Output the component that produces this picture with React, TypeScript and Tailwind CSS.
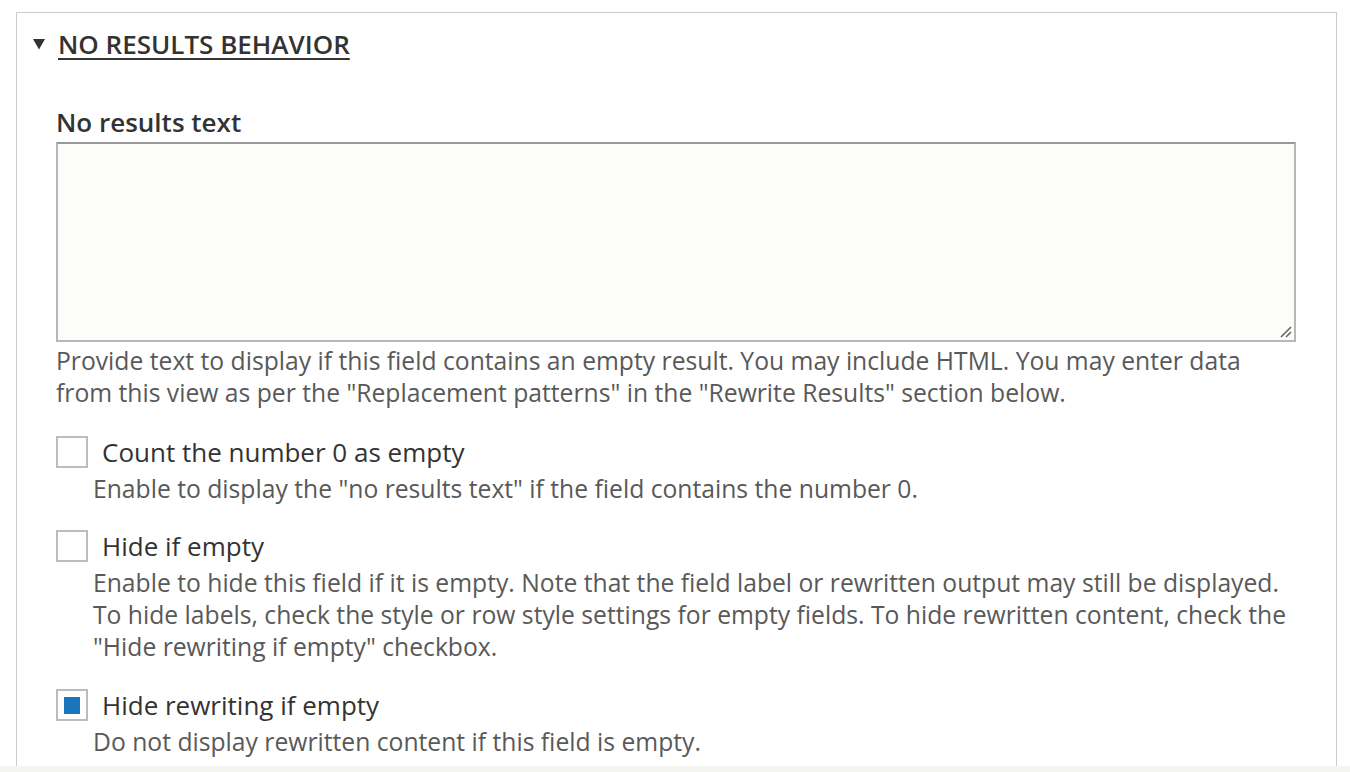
import React from 'react'

const font = { fontFamily: '"Open Sans", "Liberation Sans", sans-serif' }

type CheckProps = {
  label: string
  checked?: boolean
  lines: string[]
  className?: string
}

const CheckItem: React.FC<CheckProps> = ({ label, checked = false, lines, className = '' }) => (
  <div className={className}>
    <label className="flex items-center h-[32px]">
      <span className="w-[32px] h-[32px] border-2 border-[#bcbcbc] bg-white flex items-center justify-center shrink-0">
        {checked && <span className="w-[16px] h-[17px] bg-[#1b75bb]" />}
      </span>
      <span className="ml-[14px] text-[26px] leading-[32px] text-[#333]">{label}</span>
    </label>
    <div className="ml-[37px] mt-[5px] text-[24.7px] leading-[32px] text-[#595959]">
      {lines.map((l, i) => (
        <div key={i} className="whitespace-nowrap">{l}</div>
      ))}
    </div>
  </div>
)

const App: React.FC = () => {
  return (
    <div className="w-[1350px] h-[772px] bg-white flex flex-col overflow-hidden" style={font}>
      <div className="flex-1 pt-[12px] pl-[16px] pr-[13px] overflow-hidden">
        <div className="h-full border border-b-0 border-[#cccccc] pl-[15px] pt-[15px]">
          {/* Summary */}
          <div className="flex items-center h-[32px]">
            <svg className="ml-[1px] mr-[13px]" width="12" height="11" viewBox="0 0 12 11">
              <path d="M0 0 H12 L6 10.5 Z" fill="#333" />
            </svg>
            <span className="text-[26px] font-semibold uppercase underline underline-offset-[4px] decoration-[2px] text-[#333]">
              No results behavior
            </span>
          </div>

          <div className="pl-[24px] pr-[40px]">
            <div className="mt-[46px] text-[26px] leading-[32px] font-semibold text-[#333]">No results text</div>
            <div className="mt-[4px] relative h-[200px] border-2 border-[#b8b8b8] border-t-[#999] bg-[#fcfcfa]">
              <svg className="absolute right-[2px] bottom-[2px]" width="14" height="14" viewBox="0 0 14 14">
                <path d="M13 3 L3 13 M13 8 L8 13" stroke="#666" strokeWidth="1.6" />
              </svg>
            </div>
            <div className="mt-[3px] text-[24.7px] leading-[32px] text-[#595959] whitespace-nowrap">
              <div>Provide text to display if this field contains an empty result. You may include HTML. You may enter data</div>
              <div>from this view as per the "Replacement patterns" in the "Rewrite Results" section below.</div>
            </div>

            <CheckItem
              className="mt-[27px]"
              label="Count the number 0 as empty"
              lines={['Enable to display the "no results text" if the field contains the number 0.']}
            />
            <CheckItem
              className="mt-[25px]"
              label="Hide if empty"
              lines={[
                'Enable to hide this field if it is empty. Note that the field label or rewritten output may still be displayed.',
                'To hide labels, check the style or row style settings for empty fields. To hide rewritten content, check the',
                '"Hide rewriting if empty" checkbox.',
              ]}
            />
            <CheckItem
              className="mt-[26px]"
              label="Hide rewriting if empty"
              checked
              lines={['Do not display rewritten content if this field is empty.']}
            />
          </div>
        </div>
      </div>
      <div className="h-[6px] bg-[#f4f4f0]" />
    </div>
  )
}

export default App
